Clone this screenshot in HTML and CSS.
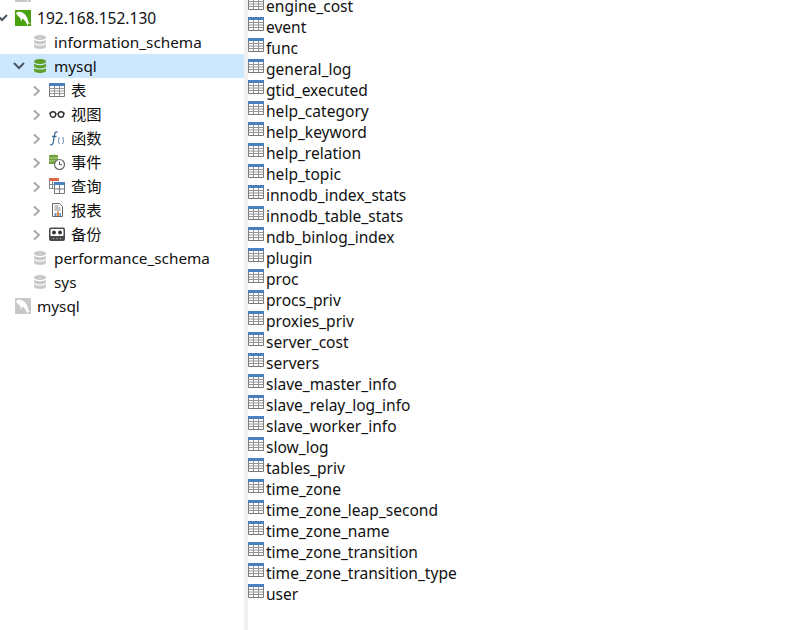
FILE: index.html
```html
<!DOCTYPE html>
<html lang="zh">
<head>
<meta charset="utf-8">
<title>Navicat</title>
<link rel="stylesheet" href="styles.css">
</head>
<body>
<svg class="defs" width="0" height="0">
  <defs>
    <symbol id="db" viewBox="0 0 16 16">
      <path d="M2 3.500C2 2 4.500 1 8 1s6 1 6 2.500S11.500 6 8 6 2 5 2 3.500z" fill="currentColor"/>
      <path d="M2 5.600C3 6.700 5 7.200 8 7.200s5-.5 6-1.600V8c0 1.400-2.500 2.400-6 2.400S2 9.400 2 8z" fill="currentColor"/>
      <path d="M2 10C3 11.100 5 11.600 8 11.600s5-.5 6-1.600v2.500c0 1.500-2.500 2.500-6 2.500s-6-1-6-2.500z" fill="currentColor"/>
    </symbol>
    <symbol id="dolphin" viewBox="0 0 16 16">
      <path d="M0 0h16v16H0z" fill="currentColor"/>
      <path d="M1 3C2.500 1.600 5 1.300 7.500 2.500 10.500 4 12.300 7 13 10.500c.3 1.400 1.200 2.600 2.500 3.500l-2.300-.6L12.500 15.800C11.500 12.500 9.800 10 7.300 8.500L6.200 11.500 5 7.500C3.500 6.700 2 5 1 3z" fill="#fff"/>
    </symbol>
    <symbol id="tbl" viewBox="0 0 16 16">
      <path d="M.5 2.500h15v12H.5z" fill="#fff" stroke="#777"/>
      <path d="M0 1h16v3H0z" fill="#4a80bd"/>
      <path d="M.5 6.500h15M.5 9h15M.5 11.500h15M5.500 4v10M10.500 4v10" fill="none" stroke="#949494"/>
    </symbol>
    <symbol id="chev-r" viewBox="0 0 8 12"><path d="M1 1.500 6 6l-5 4.500" fill="none" stroke="#a8a8a8" stroke-width="2"/></symbol>
    <symbol id="chev-d" viewBox="0 0 12 8"><path d="M1 1l5 5 5-5" fill="none" stroke="#4b5560" stroke-width="2"/></symbol>
  </defs>
</svg>

<div class="app">
  <aside class="tree">
    <div class="row lvl-conn">
      <span class="no-twisty"></span>
      <svg class="ico conn-off"><use href="#dolphin"/></svg>
      <span class="label clipped">Wan</span>
    </div>

    <div class="row lvl-conn">
      <svg class="twisty-open cut"><use href="#chev-d"/></svg>
      <svg class="ico conn-on"><use href="#dolphin"/></svg>
      <span class="label wide">192.168.152.130</span>
    </div>

    <div class="row lvl-db">
      <svg class="ico db-off"><use href="#db"/></svg>
      <span class="label">information_schema</span>
    </div>

    <div class="row lvl-db selected">
      <svg class="twisty-open"><use href="#chev-d"/></svg>
      <svg class="ico db-on"><use href="#db"/></svg>
      <span class="label">mysql</span>
    </div>

    <div class="row lvl-obj">
      <svg class="twisty"><use href="#chev-r"/></svg>
      <svg class="ico"><use href="#tbl"/></svg>
      <span class="label">表</span>
    </div>

    <div class="row lvl-obj">
      <svg class="twisty"><use href="#chev-r"/></svg>
      <svg class="ico" viewBox="0 0 16 16"><circle cx="4" cy="8.500" r="2.700" fill="none" stroke="#333" stroke-width="1.400"/><circle cx="12" cy="8.500" r="2.700" fill="none" stroke="#333" stroke-width="1.400"/><path d="M6.400 8h3.200M0 7l1.500.8M16 7l-1.500.8" stroke="#333" fill="none"/></svg>
      <span class="label">视图</span>
    </div>

    <div class="row lvl-obj">
      <svg class="twisty"><use href="#chev-r"/></svg>
      <svg class="ico" viewBox="0 0 16 16"><path d="M8.500 2.500C7 1 5.800 2.500 5.500 5L4.300 12C4 14.500 2.500 15.500 1.200 14.500M3 6.500h4.500" fill="none" stroke="#3f6a96" stroke-width="1.300"/><path d="M10.500 7c-1.300 2-1.300 5 0 7M13.500 7c1.300 2 1.300 5 0 7" fill="none" stroke="#5f83a6"/></svg>
      <span class="label">函数</span>
    </div>

    <div class="row lvl-obj">
      <svg class="twisty"><use href="#chev-r"/></svg>
      <svg class="ico" viewBox="0 0 16 16"><path d="M0 1.500C0 .5 9 .5 9 1.500V10H0z" fill="#6f9e3c"/><path d="M0 4h9M0 7h9" stroke="#b6d196"/><circle cx="10.500" cy="10.500" r="5" fill="#fff" stroke="#6a6a6a" stroke-width="1.200"/><path d="M10.500 7.500v3.200h2.600" fill="none" stroke="#555"/></svg>
      <span class="label">事件</span>
    </div>

    <div class="row lvl-obj">
      <svg class="twisty"><use href="#chev-r"/></svg>
      <svg class="ico" viewBox="0 0 16 16"><path d="M0 0h10v3H0z" fill="#d9674a"/><path d="M.5 3v7.500H5M3.500 3v7.500M.5 6.500H5" fill="none" stroke="#888"/><path d="M5.500 5.500h10v10h-10z" fill="#fff" stroke="#777"/><path d="M5 4h11v3H5z" fill="#4a80bd"/><path d="M5.500 11h10M10.500 7v8" stroke="#777" fill="none"/></svg>
      <span class="label">查询</span>
    </div>

    <div class="row lvl-obj">
      <svg class="twisty"><use href="#chev-r"/></svg>
      <svg class="ico" viewBox="0 0 16 16"><path d="M3.500 1.500h7l3 3v10h-10z" fill="#fff" stroke="#666"/><path d="M5.500 4h4M5.500 6h6M5.500 8h6" stroke="#888"/><path d="M5.500 11h2v3h-2z" fill="#5b8fc7"/><path d="M8 9.500h2V14H8z" fill="#e08a3c"/><path d="M10.500 11H12v3h-1.500z" fill="#5b8fc7"/></svg>
      <span class="label">报表</span>
    </div>

    <div class="row lvl-obj">
      <svg class="twisty"><use href="#chev-r"/></svg>
      <svg class="ico" viewBox="0 0 16 16"><rect y="1.500" width="16" height="13.500" rx="2" fill="#4a4a4a"/><rect x="1.500" y="3" width="13" height="7" rx="1" fill="#fff"/><circle cx="5" cy="6.500" r="1.900" fill="#333"/><circle cx="11" cy="6.500" r="1.900" fill="#333"/><path d="M4 12.500h1M7.500 12.500h1M11 12.500h1" stroke="#ccc"/></svg>
      <span class="label">备份</span>
    </div>

    <div class="row lvl-db">
      <svg class="ico db-off"><use href="#db"/></svg>
      <span class="label">performance_schema</span>
    </div>

    <div class="row lvl-db">
      <svg class="ico db-off"><use href="#db"/></svg>
      <span class="label">sys</span>
    </div>

    <div class="row lvl-conn">
      <span class="no-twisty"></span>
      <svg class="ico conn-off"><use href="#dolphin"/></svg>
      <span class="label">mysql</span>
    </div>
  </aside>

  <div class="splitter"></div>

  <main class="tables">
    <div class="trow"><svg class="tico"><use href="#tbl"/></svg><span>engine_cost</span></div>
    <div class="trow"><svg class="tico"><use href="#tbl"/></svg><span>event</span></div>
    <div class="trow"><svg class="tico"><use href="#tbl"/></svg><span>func</span></div>
    <div class="trow"><svg class="tico"><use href="#tbl"/></svg><span>general_log</span></div>
    <div class="trow"><svg class="tico"><use href="#tbl"/></svg><span>gtid_executed</span></div>
    <div class="trow"><svg class="tico"><use href="#tbl"/></svg><span>help_category</span></div>
    <div class="trow"><svg class="tico"><use href="#tbl"/></svg><span>help_keyword</span></div>
    <div class="trow"><svg class="tico"><use href="#tbl"/></svg><span>help_relation</span></div>
    <div class="trow"><svg class="tico"><use href="#tbl"/></svg><span>help_topic</span></div>
    <div class="trow"><svg class="tico"><use href="#tbl"/></svg><span>innodb_index_stats</span></div>
    <div class="trow"><svg class="tico"><use href="#tbl"/></svg><span>innodb_table_stats</span></div>
    <div class="trow"><svg class="tico"><use href="#tbl"/></svg><span>ndb_binlog_index</span></div>
    <div class="trow"><svg class="tico"><use href="#tbl"/></svg><span>plugin</span></div>
    <div class="trow"><svg class="tico"><use href="#tbl"/></svg><span>proc</span></div>
    <div class="trow"><svg class="tico"><use href="#tbl"/></svg><span>procs_priv</span></div>
    <div class="trow"><svg class="tico"><use href="#tbl"/></svg><span>proxies_priv</span></div>
    <div class="trow"><svg class="tico"><use href="#tbl"/></svg><span>server_cost</span></div>
    <div class="trow"><svg class="tico"><use href="#tbl"/></svg><span>servers</span></div>
    <div class="trow"><svg class="tico"><use href="#tbl"/></svg><span>slave_master_info</span></div>
    <div class="trow"><svg class="tico"><use href="#tbl"/></svg><span>slave_relay_log_info</span></div>
    <div class="trow"><svg class="tico"><use href="#tbl"/></svg><span>slave_worker_info</span></div>
    <div class="trow"><svg class="tico"><use href="#tbl"/></svg><span>slow_log</span></div>
    <div class="trow"><svg class="tico"><use href="#tbl"/></svg><span>tables_priv</span></div>
    <div class="trow"><svg class="tico"><use href="#tbl"/></svg><span>time_zone</span></div>
    <div class="trow"><svg class="tico"><use href="#tbl"/></svg><span>time_zone_leap_second</span></div>
    <div class="trow"><svg class="tico"><use href="#tbl"/></svg><span>time_zone_name</span></div>
    <div class="trow"><svg class="tico"><use href="#tbl"/></svg><span>time_zone_transition</span></div>
    <div class="trow"><svg class="tico"><use href="#tbl"/></svg><span>time_zone_transition_type</span></div>
    <div class="trow"><svg class="tico"><use href="#tbl"/></svg><span>user</span></div>
  </main>
</div>
</body>
</html>
```
FILE: styles.css
```css
html, body {
  margin: 0;
  height: 100%;
  overflow: hidden;
  background: #fff;
}
body {
  font-family: "Noto Sans", "Noto Sans CJK SC", sans-serif;
  font-size: 15px;
  color: #111;
}
.defs { position: absolute; }
.app { display: flex; height: 630px; overflow: hidden; }

.tree { width: 244px; flex: none; margin-top: -18px; font-size: 15.3px; }
.row { display: flex; align-items: center; height: 24px; }
.label { white-space: nowrap; line-height: 24px; }
.wide { font-size: 15.55px; }
.clipped { margin-left: auto; }
.ico { width: 16px; height: 16px; flex: none; }

.no-twisty { width: 15px; flex: none; }
.lvl-conn .ico { margin-right: 6px; }

.twisty-open { width: 12px; height: 8px; margin-right: 7px; flex: none; }
.twisty-open.cut { margin-left: -4px; }

.lvl-db { padding-left: 32px; }
.lvl-db .ico { margin-right: 6px; }
.lvl-db.selected { padding-left: 13px; background: #cce8ff; }

.lvl-obj { padding-left: 33px; }
.twisty { width: 8px; height: 12px; margin: 1px 8px 0 0; flex: none; }
.lvl-obj .ico { margin-right: 6px; }

.conn-on { color: #4aa10e; }
.conn-off { color: #c8c8c8; }
.db-off { color: #c9c9c9; }
.db-on { color: #5f9e28; }

.splitter { width: 4px; flex: none; background: #f0f0f0; }

.tables { flex: 1; margin-top: -4px; font-size: 15.55px; }
.trow { display: flex; height: 21px; }
.tico { width: 16px; height: 16px; margin: -1px 2px 0 0; flex: none; }
.trow span { white-space: nowrap; line-height: 21px; }
```
